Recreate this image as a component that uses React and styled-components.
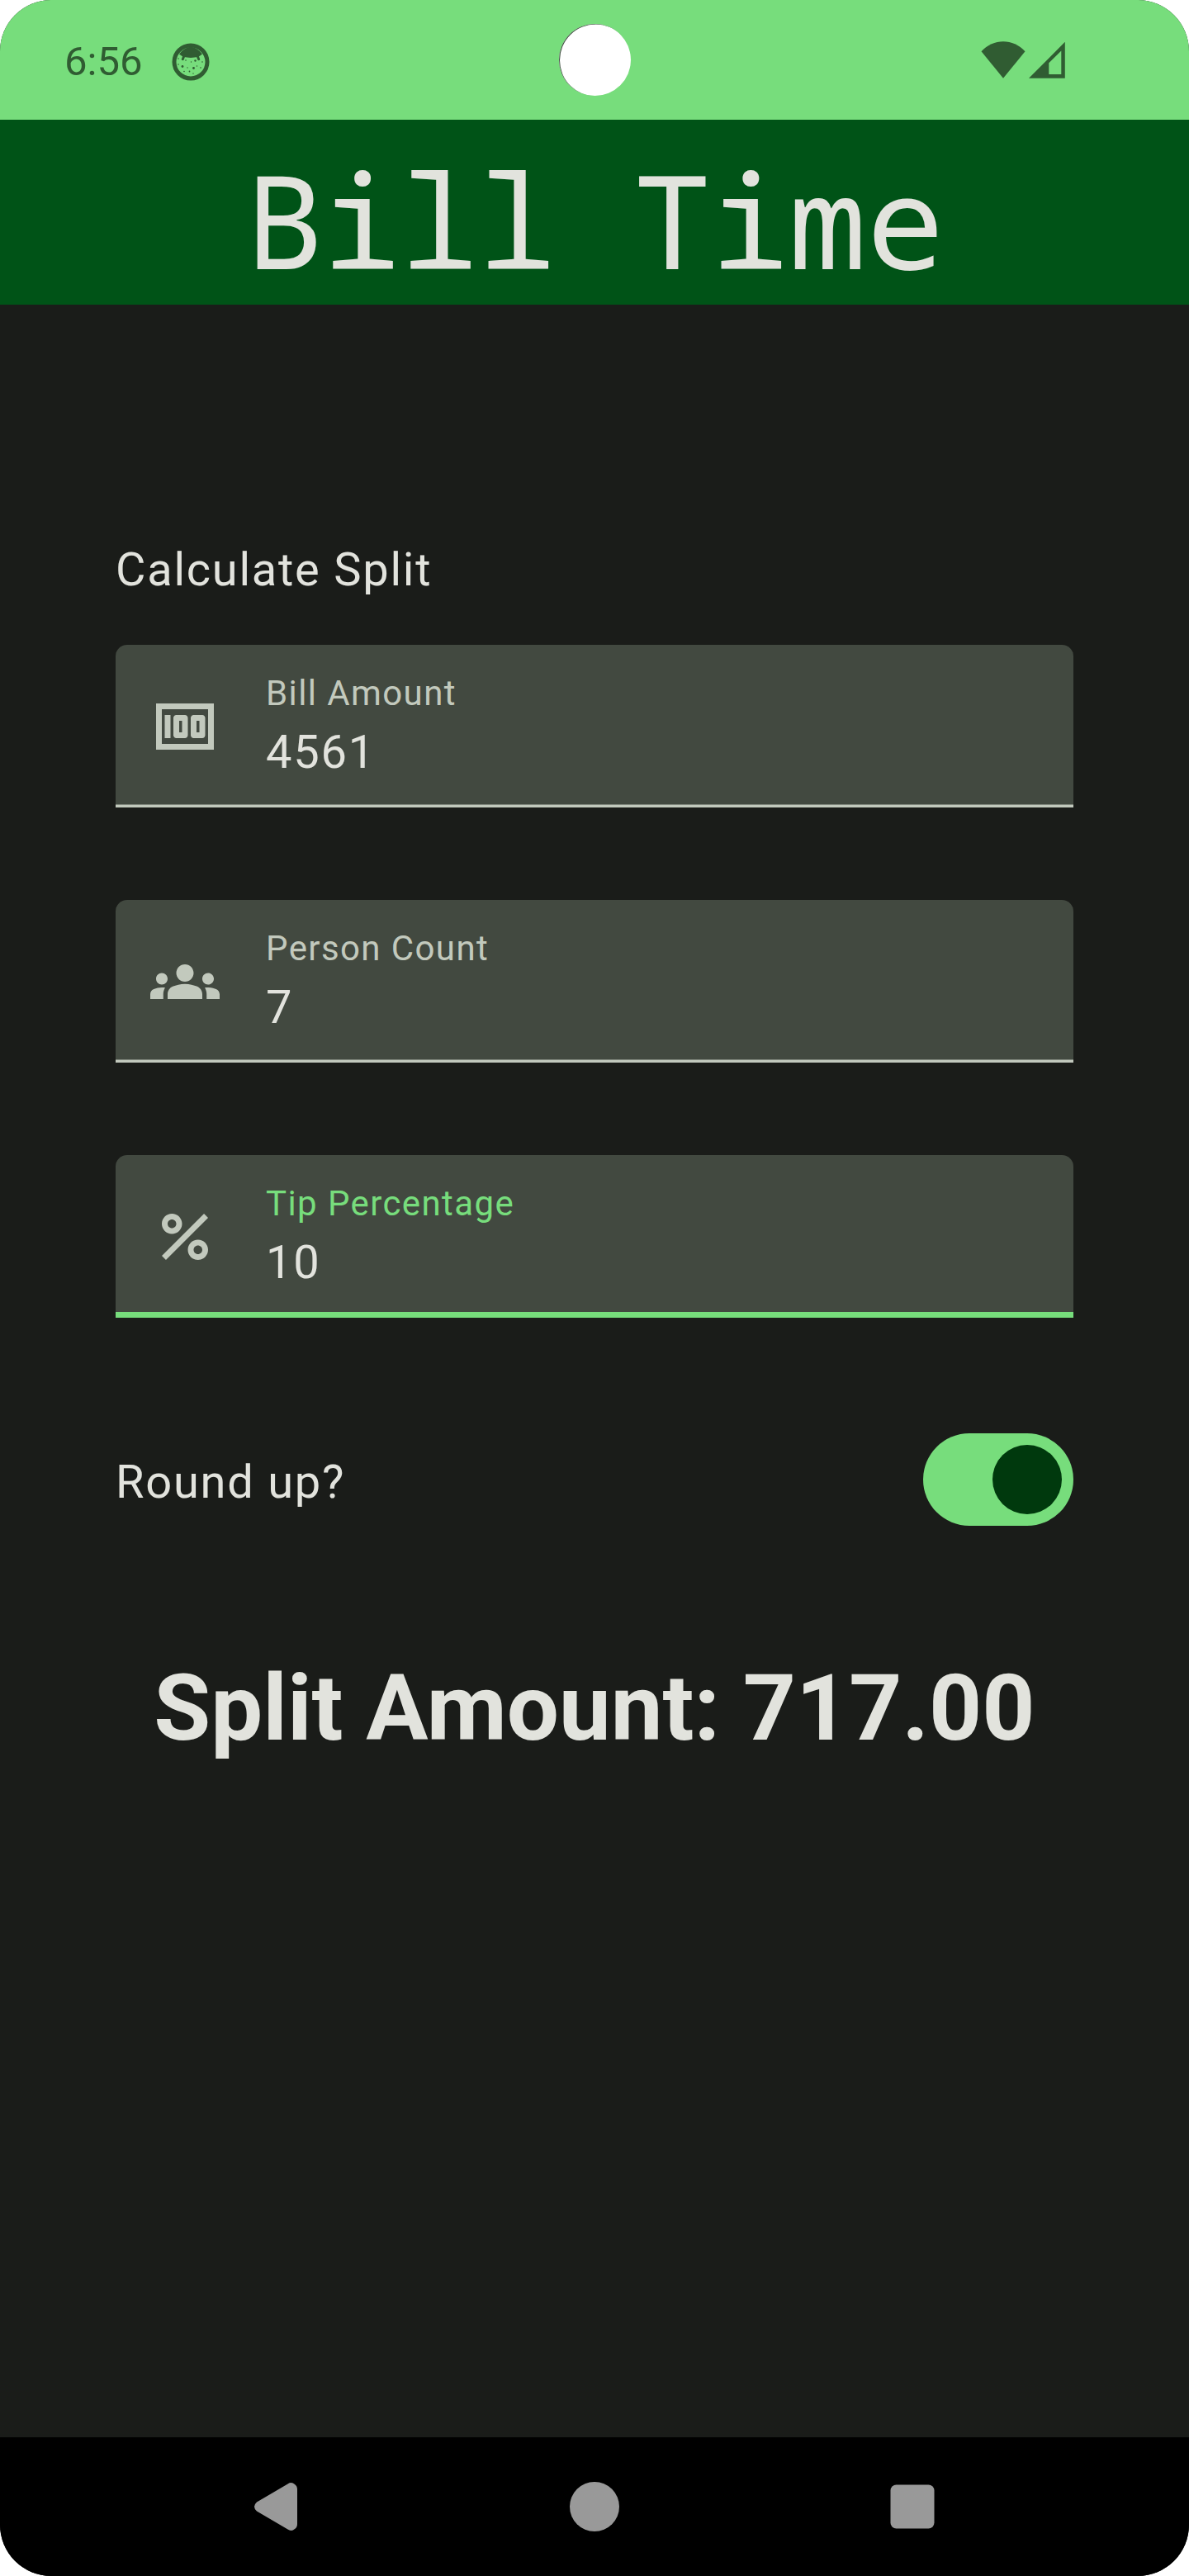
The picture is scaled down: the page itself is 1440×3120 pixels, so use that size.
import React from "react";
import styled, { createGlobalStyle } from "styled-components";
import { MdMoney, MdGroups, MdPercent } from "react-icons/md";

const GlobalStyle = createGlobalStyle`
  * { box-sizing: border-box; }
  body { margin: 0; background: #ffffff; }
`;

const Screen = styled.div`
  width: 1440px;
  height: 3120px;
  display: flex;
  flex-direction: column;
  overflow: hidden;
  border-radius: 62px;
  background: #1a1c19;
  color: #e2e3dd;
  font-family: Roboto, sans-serif;
`;

const StatusBar = styled.header`
  position: relative;
  height: 145px;
  flex: none;
  display: flex;
  align-items: flex-start;
  justify-content: space-between;
  padding: 46px 149px 0 78px;
  background: #77dd7c;
  color: #305c32;
`;

const StatusGroup = styled.div`
  display: flex;
  align-items: center;
  min-height: 54px;
  gap: ${(p) => p.$gap}px;
`;

const Clock = styled.span`
  font-size: 49px;
  line-height: 58px;
`;

const Camera = styled.div`
  position: absolute;
  left: 677px;
  top: 29px;
  width: 87px;
  height: 87px;
  border-radius: 50%;
  background: #ffffff;
  box-shadow: inset 1px 0.5px 0 #3f4f40;
`;

const TitleBar = styled.div`
  height: 224px;
  flex: none;
  display: flex;
  justify-content: center;
  background: #005317;
`;

const Title = styled.h1`
  margin: 0;
  font-family: "Droid Sans Mono", "Noto Sans Mono", "Liberation Mono", monospace;
  font-size: 157.5px;
  font-weight: 400;
  letter-spacing: -0.45px;
  line-height: 240px;
`;

const Content = styled.main`
  flex: 1;
  display: flex;
  flex-direction: column;
  padding: 279px 140px 0;
`;

const BodyText = styled.span`
  font-size: 56px;
  line-height: 84px;
  letter-spacing: 1.75px;
`;

const Fields = styled.div`
  display: flex;
  flex-direction: column;
  gap: 112px;
  margin-top: 49px;
`;

const Field = styled.label`
  height: 197px;
  display: flex;
  align-items: center;
  gap: 56px;
  padding: 0 42px;
  border-radius: 14px 14px 0 0;
  background: #424940;
  color: #c2c9bd;
  box-shadow: inset 0 ${(p) => (p.$focused ? "-7px #77dd7c" : "-3.5px #c2c9bd")};

  svg {
    flex: none;
    width: 84px;
    height: 84px;
  }
`;

const FieldText = styled.div`
  align-self: flex-start;
  display: flex;
  flex-direction: column;
  gap: 1px;
  padding-top: 31px;
`;

const FieldLabel = styled.span`
  font-size: 42px;
  line-height: 56px;
  letter-spacing: 1.4px;
  color: ${(p) => (p.$focused ? "#77dd7c" : "#c2c9bd")};
`;

const FieldValue = styled(BodyText)`
  color: #e2e3dd;
`;

const SwitchRow = styled.div`
  display: flex;
  align-items: center;
  justify-content: space-between;
  height: 112px;
  margin-top: 140px;
`;

const SwitchLabel = styled(BodyText)`
  padding-top: 6px;
`;

const Switch = styled.button`
  width: 182px;
  height: 112px;
  display: flex;
  align-items: center;
  justify-content: flex-end;
  padding: 14px;
  border: 0;
  border-radius: 56px;
  background: #77dd7c;
`;

const Thumb = styled.span`
  width: 84px;
  height: 84px;
  border-radius: 50%;
  background: #00390d;
`;

const Result = styled.div`
  margin-top: 151px;
  text-align: center;
  font-size: 112px;
  font-weight: 700;
  line-height: 140px;
`;

const NavBar = styled.nav`
  height: 168px;
  flex: none;
  display: flex;
  align-items: center;
  justify-content: space-between;
  padding: 0 305px;
  background: #000000;

  svg {
    width: 60px;
    height: 60px;
    fill: #999999;
  }
`;

const FaceIcon = () => (
  <svg width="46" height="46" viewBox="0 0 46 46">
    <circle cx="23" cy="23" r="20" fill="none" stroke="currentColor" strokeWidth="5" />
    <path d="M9 13.500Q23 -4 37 13.500L32.500 16.800Q23 19 13.500 16.800Z" fill="currentColor" />
    <path d="M15 15.500L13.300 19.700M31 15.500L32.700 19.700" stroke="currentColor" strokeWidth="3" strokeLinecap="round" />
    <g fill="currentColor">
      <circle cx="13" cy="28.500" r="1.400" /><circle cx="26.500" cy="30.500" r="1.400" />
      <circle cx="28.500" cy="21.500" r="1.200" /><circle cx="17" cy="21" r=".8" />
      <circle cx="8" cy="19" r=".8" /><circle cx="8" cy="26" r=".8" />
      <circle cx="37" cy="23" r=".8" /><circle cx="35" cy="30" r=".8" />
      <circle cx="19" cy="30" r=".7" /><circle cx="15" cy="34.500" r=".8" />
      <circle cx="21.500" cy="34.500" r=".9" /><circle cx="26" cy="37" r=".7" />
      <circle cx="23.500" cy="23" r=".7" /><circle cx="30.500" cy="28" r=".7" />
    </g>
  </svg>
);

const WifiIcon = () => (
  <svg width="54" height="46" viewBox="0 0 54 46">
    <path d="M.5 12.300C15 -3.700 39 -3.700 53.500 12.300L27 44.700Z" fill="currentColor" />
  </svg>
);

const SignalIcon = () => (
  <svg width="45" height="46" viewBox="0 0 45 46">
    <path fillRule="evenodd" d="M0 44.700L43.800 .8V44.700ZM24.300 26.300V40H39.300V11.500Z" fill="currentColor" />
  </svg>
);

const FIELDS = [
  { label: "Bill Amount", value: "4561", Icon: MdMoney },
  { label: "Person Count", value: "7", Icon: MdGroups },
  { label: "Tip Percentage", value: "10", Icon: MdPercent, focused: true },
];

export default function App() {
  return (
    <>
      <GlobalStyle />
      <Screen>
        <StatusBar>
          <StatusGroup $gap={36}>
            <Clock>6:56</Clock>
            <FaceIcon />
          </StatusGroup>
          <Camera />
          <StatusGroup $gap={4}>
            <WifiIcon />
            <SignalIcon />
          </StatusGroup>
        </StatusBar>
        <TitleBar>
          <Title>Bill Time</Title>
        </TitleBar>
        <Content>
          <BodyText>Calculate Split</BodyText>
          <Fields>
            {FIELDS.map(({ label, value, Icon, focused }) => (
              <Field key={label} $focused={focused}>
                <Icon />
                <FieldText>
                  <FieldLabel $focused={focused}>{label}</FieldLabel>
                  <FieldValue>{value}</FieldValue>
                </FieldText>
              </Field>
            ))}
          </Fields>
          <SwitchRow>
            <SwitchLabel>Round up?</SwitchLabel>
            <Switch role="switch" aria-checked="true" aria-label="Round up">
              <Thumb />
            </Switch>
          </SwitchRow>
          <Result>Split Amount: 717.00</Result>
        </Content>
        <NavBar>
          <svg viewBox="0 0 60 60">
            <path d="M6 24.500L43.500 2.500Q48 -.5 52 3Q55 5 55 9V51Q55 55 52 57Q48 60.500 43.500 57.500L6 35.500Q0 30 6 24.500Z" />
          </svg>
          <svg viewBox="0 0 60 60">
            <circle cx="30" cy="30" r="30" />
          </svg>
          <svg viewBox="0 0 60 60">
            <rect x="3.500" y="3.500" width="53" height="53" rx="7" />
          </svg>
        </NavBar>
      </Screen>
    </>
  );
}
